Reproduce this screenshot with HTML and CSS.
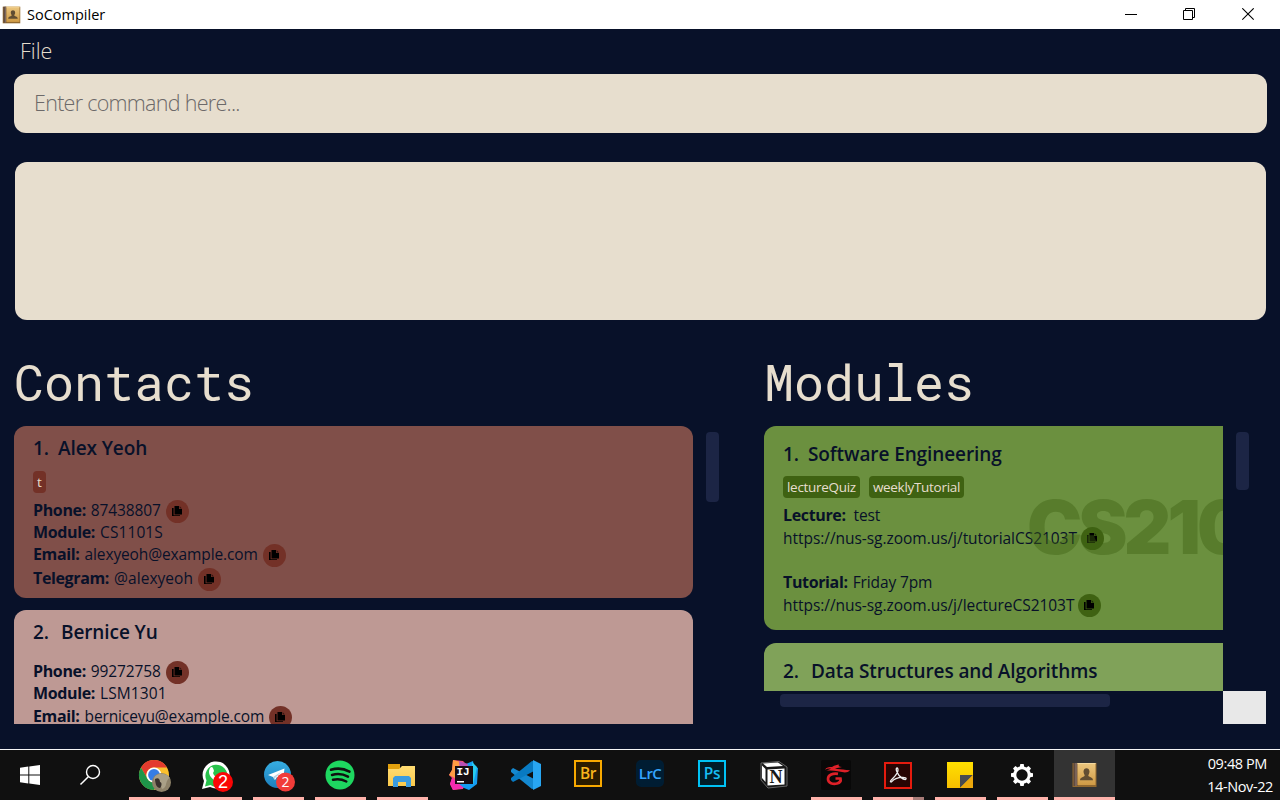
FILE: index.html
```html
<!DOCTYPE html>
<html lang="en">
<head>
<meta charset="utf-8">
<title>SoCompiler</title>
<link rel="stylesheet" href="styles.css">
</head>
<body>
<svg class="defs" width="0" height="0">
  <defs>
    <linearGradient id="gold" x1="0" y1="0" x2="0" y2="1"><stop offset="0" stop-color="#ecc77f"/><stop offset="1" stop-color="#cf9a45"/></linearGradient>
    <linearGradient id="tele" x1="0" y1="0" x2="0" y2="1"><stop offset="0" stop-color="#37aee2"/><stop offset="1" stop-color="#1c7fbd"/></linearGradient>
    <linearGradient id="note" x1="0" y1="0" x2="0" y2="1"><stop offset="0" stop-color="#ffe000"/><stop offset="1" stop-color="#f7be00"/></linearGradient>
    <linearGradient id="folder" x1="0" y1="0" x2="0" y2="1"><stop offset="0" stop-color="#ffdc73"/><stop offset="1" stop-color="#fbc94b"/></linearGradient>
    <symbol id="copy" viewBox="0 0 10 10"><path d="M2.500 0h4.500v3h3v5.500H2.500z"/><path d="M7.600 0 10 2.400H7.600z" opacity=".55"/><path d="M0 2h1.600v7.300H8V10H0z"/></symbol>
    <symbol id="book" viewBox="0 0 26 26"><path d="M1 1h24v24H1z" fill="#91682f"/><path d="M2 1h4v23H2z" fill="#604b40"/><path d="M4 1h1v23H4z" fill="#937d70"/><path d="M6 1h18v22H6z" fill="url(#gold)"/><path d="M6 1h18v1H6z" fill="#f4d99f"/><path d="M12 9.500c0-4.500 6-4.500 6 0 0 2-1 3-1.200 4 0 1.700 4.700 1.400 4.700 4.800H8.500c0-3.400 4.700-3.100 4.700-4.800 0-1-1.200-2-1.200-4z" fill="#614d32"/></symbol>
  </defs>
</svg>
<div class="window">
  <header class="titlebar">
    <svg class="app-icon" width="19" height="18" viewBox="0 0 26 26" preserveAspectRatio="none"><use href="#book"/></svg>
    <span class="app-name">SoCompiler</span>
    <div class="controls">
      <svg width="13" height="13"><path d="M0 6.500h12" stroke="#000"/></svg>
      <svg width="13" height="13"><path d="M.5 2.500h9v9h-9zM2.500 2V.5h9v9H10" fill="none" stroke="#000"/></svg>
      <svg class="close" width="13" height="13"><path d="M.3.300l11.400 11.400M11.700.300.3 11.700" stroke="#000" stroke-width="1.100"/></svg>
    </div>
  </header>
  <nav class="menu"><span class="menu-item">File</span></nav>
  <div class="command"><span class="placeholder">Enter command here...</span></div>
  <div class="result"></div>
  <main class="panes">
    <section class="pane contacts">
      <h1>Contacts</h1>
      <div class="scroll">
        <div class="list">
          <article class="card rust">
            <h2><span class="no">1.</span>Alex Yeoh</h2>
            <div class="tags"><span class="tag">t</span></div>
            <div class="row"><b>Phone:</b><span class="digits">87438807</span><i class="copy"><svg width="10" height="10"><use href="#copy"/></svg></i></div>
            <div class="row plain"><b>Module:</b><span class="code">CS1101S</span></div>
            <div class="row"><b>Email:</b><span>alexyeoh@example.com</span><i class="copy"><svg width="10" height="10"><use href="#copy"/></svg></i></div>
            <div class="row"><b>Telegram:</b><span class="handle">@alexyeoh</span><i class="copy"><svg width="10" height="10"><use href="#copy"/></svg></i></div>
          </article>
          <article class="card rose">
            <h2><span class="no wide">2.</span>Bernice Yu</h2>
            <div class="tags empty"></div>
            <div class="row"><b>Phone:</b><span class="digits">99272758</span><i class="copy"><svg width="10" height="10"><use href="#copy"/></svg></i></div>
            <div class="row plain"><b>Module:</b><span class="code">LSM1301</span></div>
            <div class="row"><b>Email:</b><span>berniceyu@example.com</span><i class="copy"><svg width="10" height="10"><use href="#copy"/></svg></i></div>
          </article>
        </div>
        <div class="vbar"></div>
      </div>
    </section>
    <section class="pane modules">
      <h1>Modules</h1>
      <div class="scroll">
        <div class="column">
          <div class="list">
            <article class="card green">
              <h2><span class="no">1.</span>Software Engineering</h2>
              <div class="tags"><span class="tag quiz">lectureQuiz</span><span class="tag weekly">weeklyTutorial</span></div>
              <div class="row plain"><b>Lecture:</b><span class="test">test</span></div>
              <div class="row"><span class="url">https://nus-sg.zoom.us/j/tutorialCS2103T</span><i class="copy"><svg width="10" height="10"><use href="#copy"/></svg></i></div>
              <div class="row plain second"><b>Tutorial:</b><span>Friday 7pm</span></div>
              <div class="row"><span class="url">https://nus-sg.zoom.us/j/lectureCS2103T</span><i class="copy"><svg width="10" height="10"><use href="#copy"/></svg></i></div>
              <div class="watermark">CS2103T</div>
            </article>
            <article class="card lime">
              <h2><span class="no wide">2.</span>Data Structures and Algorithms</h2>
            </article>
          </div>
          <div class="hbar"></div>
        </div>
        <div class="side"><div class="vbar"></div><div class="corner"></div></div>
      </div>
    </section>
  </main>
</div>
<footer class="taskbar">
  <div class="sys"><svg width="20" height="20" viewBox="0 0 20 20"><path d="M0 2.800 8.300 1.600v7.900H0zM9.300 1.500 20 0v9.500H9.300zM0 10.500h8.300v7.900L0 17.200zM9.300 10.500H20V20L9.300 18.500z" fill="#fff"/></svg></div>
  <div class="sys"><svg width="22" height="22" viewBox="0 0 22 22"><circle cx="14" cy="8" r="6.500" fill="none" stroke="#fff" stroke-width="1.400"/><path d="M9.300 12.700 1.500 20.500" stroke="#fff" stroke-width="1.500"/></svg></div>
  <div class="apps">
    <div class="app open"><svg width="34" height="34" viewBox="0 0 34 34"><circle cx="17" cy="17" r="15" fill="#fbc02d"/><path d="M4 9.500A15 15 0 0 1 30 9.500H17A7.500 7.500 0 0 0 10.500 21z" fill="#e33b2e"/><path d="M4 9.500A15 15 0 0 0 17 32l6.500-11.200A7.500 7.500 0 0 1 10.500 20.700z" fill="#1e9649"/><circle cx="17" cy="17" r="7.600" fill="#fff"/><circle cx="17" cy="17" r="5.900" fill="#367de5"/><circle cx="24.500" cy="24.500" r="9.500" fill="#8e8269"/><path d="M17 20c3-6 13-5 16 0-2 0-3 3-4 6 0 2-2 5-4 5-1-2-1-4-3-4-3 0-4-2-5-7z" fill="#aaa087"/><path d="M18 21c3-2 5 0 5 3 2 0 2 4 0 6-3 0-5-4-5-9z" fill="#39312d"/></svg></div>
    <div class="app open"><svg width="34" height="34" viewBox="0 0 34 34"><path d="M3 31 5 23A13.500 13.500 0 1 1 11 29z" fill="#fff"/><path d="M6 28.500 7.500 22.500A11 11 0 1 1 11.500 27z" fill="#28c24c"/><path d="M11 10c2-2 3-1 4 3l-1 2c1 3 3 4 5 5l2-2 4 2c-1 4-4 5-8 3-5-2-9-8-6-13z" fill="#fff"/><circle cx="24" cy="24" r="10" fill="#fb0505"/><text class="badge" x="24" y="30">2</text></svg></div>
    <div class="app open"><svg width="34" height="34" viewBox="0 0 34 34"><circle cx="16.500" cy="16.500" r="13.500" fill="url(#tele)"/><path d="M7 17 23.500 10.500 22 22 16 19l-2 3-2-3z" fill="#fff"/><path d="m12 19 8-5-6 6-.5 2z" fill="#b4d2e5"/><circle cx="24.500" cy="24" r="9.500" fill="#f13c39"/><text class="badge thin" x="24.500" y="29">2</text></svg></div>
    <div class="app open"><svg width="30" height="30" viewBox="0 0 30 30"><circle cx="15" cy="15" r="14.500" fill="#1ed760"/><path d="M6 9.800c6-1.900 13-1.200 18.500 1.800M7 15c5-1.500 11-1 16 1.700M8 19.800c4.500-1.200 9-.6 13.300 1.700" fill="none" stroke="#101010" stroke-width="2.500" stroke-linecap="round"/></svg></div>
    <div class="app open"><svg width="30" height="28" viewBox="0 0 30 28"><path d="M1 3h12v6H1z" fill="#e2a00d"/><path d="M1 8h11l3-3h13v20H1z" fill="url(#folder)"/><path d="M6 26v-9l2-2h14l2 2v9h-5v-5h-8v5z" fill="#3b9bdf"/></svg></div>
    <div class="app"><svg width="30" height="30" viewBox="0 0 30 30"><path d="M4 0 14 1l4 4-4 24-10 1-3-6 2-6-3-3 3-5z" fill="#f14a79"/><path d="M4 0 12 2 6 18l-6-3 3-5z" fill="#ff9c43"/><path d="m17 4 7-3 1 5 4 2-1 16-8 6-10-4z" fill="#159cf1"/><path d="m10 1 9 3-2 9-6-3z" fill="#b94fb6"/><path d="m3 18 12 10-11 2-3-6z" fill="#f52bb1"/><path d="m23 2 5 5-4 18z" fill="#28ccf0"/><path d="M6 6h18v18H6z" fill="#160d13"/><path d="M8 21h7v1.500H8z" fill="#fff"/><text class="ij" x="7.500" y="15">IJ</text></svg></div>
    <div class="app"><svg width="30" height="30" viewBox="0 0 30 30"><path d="M2 8 0 10v2l21 17 4-1V20z" fill="#1488d0"/><path d="M2 22 0 20v-2L21 1l4 1v8z" fill="#087ac2"/><path d="M22 0 30 4v22l-8 4z" fill="#28a6f2"/></svg></div>
    <div class="app"><span class="adobe br">Br</span></div>
    <div class="app"><span class="adobe lrc">LrC</span></div>
    <div class="app"><span class="adobe ps">Ps</span></div>
    <div class="app"><svg width="28" height="28" viewBox="0 0 28 28"><path d="m1 2 18-1.500 8 5.500v19L8 27 1 19z" fill="#181818" stroke="#666"/><path d="m3 2.500 15-1 5 3.500-16 1z" fill="#fff"/><path d="M2 4.500 5.500 8v13L2 17z" fill="#fff"/><path d="m7.500 8.500 17-1v16l-17 1z" fill="#fff"/><text class="notion" x="9.500" y="22">N</text></svg></div>
    <div class="app open"><svg width="30" height="30" viewBox="0 0 30 30"><rect width="30" height="30" rx="2" fill="#080808"/><path d="M11 7c3-2 5-2 7-2.500-1 1.500 0 2.500 3 2.500-3 .5-5 1-7 2 5-.5 9 1 15 1.200-2 2.300-5 2.600-8 1.800-6-1.500-10-1.500-16-1.500 2-.3 3-1.300 5-1.800-2-.4-4 0-6 1C5 7.500 8 7 11 7z" fill="#dd2028"/><path d="M17 13.800c-5-.8-10 1-10 5.200s5 5.500 9 4.500c3-.8 4-3 3.500-5h-5" fill="none" stroke="#dd2028" stroke-width="2.700"/></svg></div>
    <div class="app open multi"><svg width="28" height="27" viewBox="0 0 28 27"><path d="M1 1h26v25H1z" fill="#270503" stroke="#e51b0e" stroke-width="2"/><path d="M7 20c-3-1 7-6 7-12 0-4-3-2-1 2 2 5 8 9 9 7s-6-2-10-.3S8 20 7 20z" fill="none" stroke="#ededed" stroke-width="1.300"/></svg></div>
    <div class="app open"><svg width="26" height="26" viewBox="0 0 26 26"><path d="M0 0h26v26H0z" fill="url(#note)"/><path d="M13 13h13L13 26z" fill="#494a4f"/><path d="M26 13v13H13z" fill="#eda80c"/></svg></div>
    <div class="app open"><svg width="24" height="24" viewBox="-12 -12 24 24"><circle r="7.200" fill="none" stroke="#fff" stroke-width="3"/><g fill="#fff"><path id="tooth" d="M-2.200-8 -1.700-11h3.400l.5 3z"/><use href="#tooth" transform="rotate(45)"/><use href="#tooth" transform="rotate(90)"/><use href="#tooth" transform="rotate(135)"/><use href="#tooth" transform="rotate(180)"/><use href="#tooth" transform="rotate(225)"/><use href="#tooth" transform="rotate(270)"/><use href="#tooth" transform="rotate(315)"/></g></svg></div>
    <div class="app open active"><svg width="27" height="26" viewBox="0 0 26 26"><use href="#book"/></svg></div>
  </div>
  <div class="clock"><span class="time">09:48 PM</span><span class="date">14-Nov-22</span></div>
</footer>
</body>
</html>
```
FILE: styles.css
```css
* { box-sizing: border-box; }
body {
  margin: 0;
  width: 1280px;
  height: 800px;
  overflow: hidden;
  display: flex;
  flex-direction: column;
  background: #081129;
  color: #081129;
  font-family: "Open Sans", "Noto Sans", sans-serif;
  font-size: 16px;
}
svg { display: block; }
.defs { position: absolute; }
.window { height: 749px; display: flex; flex-direction: column; }

.titlebar { height: 29px; flex: none; background: #fff; display: flex; align-items: center; padding: 0 25px 0 2px; }
.app-name { margin-left: 6px; color: #000; font-size: 14.5px; }
.controls { display: flex; gap: 45px; margin-left: auto; }
.close { margin-left: 1px; }

.menu { height: 45px; flex: none; padding-left: 20px; line-height: 44px; color: #e7decd; font-size: 21.5px; font-weight: 300; }
.command { height: 59px; flex: none; margin: 0 13px 0 14px; padding-left: 20px; border-radius: 12px; background: #e7dece; line-height: 58px; font-size: 21.5px; font-weight: 300; color: #6c6969; }
.placeholder { letter-spacing: -0.72px; }
.result { height: 158px; flex: none; margin: 29px 14px 0 15px; border-radius: 12px; background: #e7dece; }

.panes { display: flex; padding: 34px 14px 0; }
.pane { display: flex; flex-direction: column; }
.contacts { width: 750px; }
.modules { width: 502px; }
h1 { margin: 0; height: 72px; line-height: 57px; font-family: "Roboto Mono", "DejaVu Sans Mono", monospace; font-size: 50px; font-weight: 400; color: #e7dece; }
.scroll { display: flex; height: 298px; }
.list { overflow: hidden; display: flex; flex-direction: column; gap: 12px; }
.contacts .list { width: 679px; }
.card { flex: none; border-radius: 12px; padding: 9px 19px 0; position: relative; }
.rust { height: 172px; background: #804f49; }
.rose { height: 172px; background: #be9994; }
h2 { margin: 0; height: 25px; line-height: 27px; font-size: 19px; font-weight: 600; white-space: nowrap; letter-spacing: -0.1px; }
.no { display: inline-block; width: 25px; }
.no.wide { width: 28px; }
.tags { display: flex; gap: 9px; height: 22px; margin: 11px 0 6px; }
.tags.empty { height: 0; margin: 11px 0 5px; }
.tag { height: 22px; line-height: 22px; padding: 0 4px; border-radius: 4px; background: #733127; color: #e7dece; font-size: 13.5px; letter-spacing: -0.3px; white-space: nowrap; }
.row { display: flex; align-items: center; height: 24px; white-space: nowrap; line-height: 22px; }
.row.plain { height: 20px; }
.row b, .row span { margin-top: -1px; }
.contacts .row b, .contacts .row span { margin-top: -3px; }
.row b { margin-right: 5px; font-weight: 700; font-size: 16px; letter-spacing: -0.36px; }
.row span { font-size: 15.5px; letter-spacing: -0.12px; }
.row .handle { letter-spacing: 0.05px; }
.row .code { letter-spacing: 0.1px; }
.row .url { letter-spacing: -0.04px; }
.rose .plain { height: 21px; }
.copy { flex: none; display: flex; align-items: center; justify-content: center; width: 23px; height: 23px; margin-left: 5px; padding-right: 1px; border-radius: 50%; background: #733127; }
.vbar { width: 13px; border-radius: 4px; background: #1c2545; }
.contacts .vbar { height: 70px; margin: 6.4px 0 0 13.4px; }

.modules .column { width: 459px; }
.modules .list { height: 265px; gap: 13px; }
.modules .card { width: 620px; padding-top: 15px; }
.green { height: 204px; background: #6b903f; }
.lime { height: 204px; background: #80a259; }
.green .tags { margin: 10px 0 7px; }
.green .tag, .green .copy { background: #3f6212; }
.green .copy { margin-left: 4px; }
.green .row.plain { height: 21px; }
.green .row.second { margin-top: 22px; height: 21px; }
.row .test { margin-left: 3px; }
.watermark { position: absolute; left: 263px; top: 56px; line-height: 90px; font-family: Inter, sans-serif; font-weight: 900; font-size: 74px; letter-spacing: -4px; color: rgba(63, 98, 18, 0.42); }
.hbar { width: 330px; height: 13px; margin: 3.4px 0 0 16.4px; border-radius: 4px; background: #1c2545; }
.side { width: 43px; display: flex; flex-direction: column; }
.side .vbar { height: 58px; margin: 6.4px 0 0 13.4px; }
.corner { height: 33px; margin-top: auto; background: #e8e8e8; }

.taskbar { height: 51px; border-top: 1px solid #f5f5f5; background: #101010; display: flex; color: #fff; }
.sys { width: 60px; display: flex; align-items: center; justify-content: center; }
.apps { display: flex; gap: 1px; margin-left: 4px; }
.app { width: 61px; height: 50px; padding-right: 1px; display: flex; align-items: center; justify-content: center; position: relative; }
.open::after { content: ""; position: absolute; left: 5px; bottom: 0; width: 51px; height: 3px; background: #ffb3ab; }
.multi::after { background: linear-gradient(90deg, #ffb3ab 40px, #a87c78 40px); }
.active { background: #333; }
.active::after { left: 0; width: 61px; }
.badge { font: 18px "Liberation Sans", sans-serif; fill: #fff; text-anchor: middle; }
.badge.thin { font: 14px "Open Sans", sans-serif; }
.ij { font: bold 11px "Liberation Mono", monospace; fill: #fff; }
.notion { font: bold 18px "Liberation Serif", serif; fill: #181818; }
.adobe { width: 28px; height: 27px; margin-bottom: 3px; border: 2px solid; line-height: 22px; text-align: center; font-size: 15.5px; font-weight: 600; letter-spacing: -0.4px; }
.br { color: #f8b51c; border-color: #f8a900; background: #291b00; }
.lrc { color: #35a5ff; border-color: #001d33; border-radius: 5px; background: #001d33; font-size: 15px; letter-spacing: -0.6px; }
.ps { color: #17bdf3; border-color: #00c2f5; background: #001c27; }
.clock { margin-left: auto; width: 90px; padding-right: 7px; display: flex; flex-direction: column; align-items: flex-end; font-size: 14.5px; line-height: 23px; padding-top: 2px; letter-spacing: -0.4px; white-space: nowrap; }
.time { margin-right: 6px; }
```
